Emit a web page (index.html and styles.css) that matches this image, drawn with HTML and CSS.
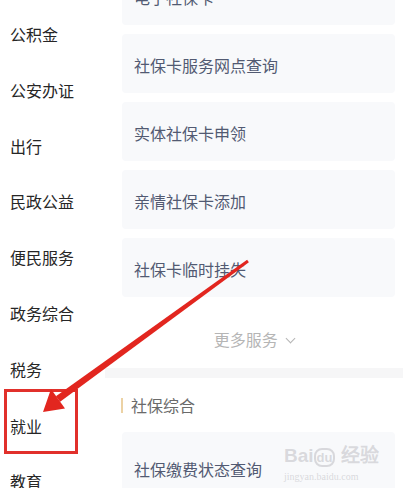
FILE: index.html
```html
<!DOCTYPE html>
<html lang="zh-CN">

<head>
  <meta charset="UTF-8">
  <meta name="viewport" content="width=device-width, initial-scale=1.0">
  <title>社保服务</title>
  <link rel="stylesheet" href="styles.css">
</head>

<body>
  <div class="page">
    <!-- 左侧分类 -->
    <ul class="side">
      <li>公积金</li>
      <li>公安办证</li>
      <li>出行</li>
      <li>民政公益</li>
      <li>便民服务</li>
      <li>政务综合</li>
      <li>税务</li>
      <li class="mark">就业</li>
      <li>教育</li>
    </ul>
    <!-- 右侧服务 -->
    <div class="main">
      <ul class="cards">
        <li>电子社保卡</li>
        <li>社保卡服务网点查询</li>
        <li>实体社保卡申领</li>
        <li>亲情社保卡添加</li>
        <li>社保卡临时挂失</li>
      </ul>
      <div class="more">更多服务 <span class="chev"></span></div>
      <div class="band"></div>
      <div class="title">社保综合</div>
      <ul class="cards last">
        <li>社保缴费状态查询</li>
      </ul>
    </div>
  </div>

  <!-- 标注箭头 -->
  <svg class="arrow" width="403" height="488" viewBox="0 0 403 488">
    <polygon points="248.9,262.2 247.1,259.8 55.9,396.2 60.1,401.8" fill="#e2261f" />
    <polygon points="43,412 51,389 65,408.5" fill="#e2261f" />
  </svg>

  <div class="wm">
    <div class="wm-logo">Bai<span>du</span> 经验</div>
    <div class="wm-url">jingyan.baidu.com</div>
  </div>
</body>

</html>
```

FILE: styles.css
```css
* {
  margin: 0;
  padding: 0
}

ul {
  list-style: none
}

body {
  width: 403px;
  height: 488px;
  overflow: hidden;
  background-color: #fff;
  font-family: "Noto Sans CJK SC", "Noto Sans", sans-serif;
  position: relative;
}

.page {
  display: flex;
}

.side {
  width: 105px;
  flex-shrink: 0;
  padding-top: 7px;
}

.side li {
  height: 55.75px;
  line-height: 55.75px;
  padding-left: 10px;
  font-size: 16px;
  color: #262626;
}

.side li.mark {
  margin: -8px 27px 0 4px;
  padding: 9px 0 0 3px;
  border: 3px solid #e1302b;
  height: 50px;
  line-height: 50px;
}

.main {
  flex: 1;
  margin-top: -34px;
}

.cards {
  padding: 0 8px 0 17px;
}

.cards li {
  height: 59px;
  line-height: 63px;
  margin-bottom: 9px;
  padding-left: 12px;
  background-color: #f8f9fb;
  border-radius: 4px;
  font-size: 16px;
  color: #525a72;
}

.more {
  height: 62px;
  line-height: 66px;
  text-align: center;
  font-size: 16px;
  color: #b5b5b5;
}

.chev {
  display: inline-block;
  width: 6px;
  height: 6px;
  border-right: 1.5px solid #b5b5b5;
  border-bottom: 1.5px solid #b5b5b5;
  transform: rotate(45deg);
  margin: 0 0 4px 6px;
}

.band {
  height: 10px;
  background-color: #f6f6f7;
}

.title {
  display: flex;
  align-items: center;
  height: 54px;
  padding-left: 16px;
  font-size: 16px;
  color: #6a6a6a;
}

.title::before {
  content: "";
  width: 2px;
  height: 15px;
  background-color: #ecd2a4;
  margin-right: 8px;
}

.cards.last li {
  height: 70px;
  line-height: 74px;
}

.arrow {
  position: absolute;
  left: 0;
  top: 0;
  pointer-events: none;
}

.wm {
  position: absolute;
  left: 284px;
  top: 444px;
  color: rgba(190, 190, 195, .55);
  font-family: "Liberation Sans", sans-serif;
}

.wm-logo {
  font-size: 19px;
  font-weight: bold;
  line-height: 24px;
}

.wm-logo span {
  font-size: 13px;
  border: 2px solid rgba(190, 190, 195, .55);
  border-radius: 8px;
  padding: 0 1px;
}

.wm-url {
  font-family: "Liberation Serif", serif;
  font-size: 10px;
  line-height: 14px;
}
```
